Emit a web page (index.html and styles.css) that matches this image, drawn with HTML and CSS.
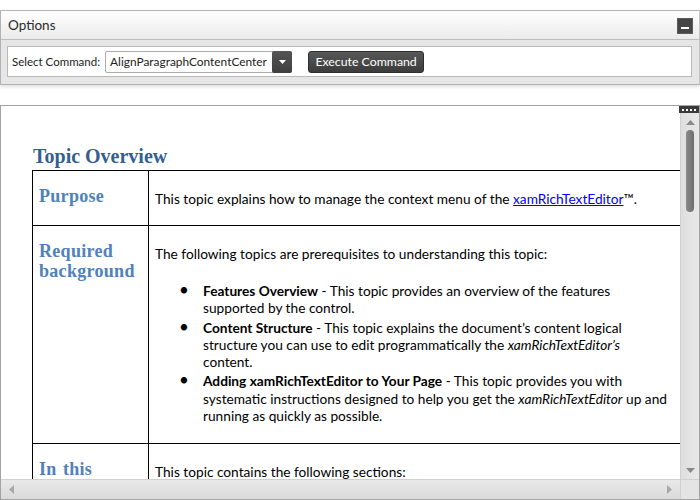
FILE: index.html
```html
<!DOCTYPE html>
<html>
<head>
<meta charset="utf-8">
<link rel="stylesheet" href="styles.css">
</head>
<body>
<div class="options">
  <div class="options-head">
    <span class="options-title">Options</span>
    <span class="min-btn"><span class="min-bar"></span></span>
  </div>
  <div class="options-body">
    <div class="cmd-box">
      <span class="cmd-label">Select Command:</span>
      <span class="combo">
        <span class="combo-text">AlignParagraphContentCenter</span>
        <span class="combo-btn"><svg width="7" height="4" viewBox="0 0 7 4"><path d="M0 0H7L3.5 4Z" fill="#fff"/></svg></span>
      </span>
      <span class="exec-btn">Execute Command</span>
    </div>
  </div>
</div>

<div class="editor">
  <div class="doc">
    <h1 class="doc-title">Topic Overview</h1>
    <table class="topic-table">
      <tr class="row-purpose">
        <td class="label">Purpose</td>
        <td class="desc"><p class="para">This topic explains how to manage the context menu of the <a class="link" href="#">xamRichTextEditor</a>™.</p></td>
      </tr>
      <tr class="row-req">
        <td class="label">Required background</td>
        <td class="desc">
          <p class="para intro">The following topics are prerequisites to understanding this topic:</p>
          <ul class="prereq">
            <li><b>Features Overview</b> - This topic provides an overview of the features supported by the control.</li>
            <li><b>Content Structure</b> - This topic explains the document’s content logical structure you can use to edit programmatically the <i>xamRichTextEditor’s</i> content.</li>
            <li><b>Adding xamRichTextEditor to Your Page</b> - This topic provides you with systematic instructions designed to help you get the <i>xamRichTextEditor</i> up and running as quickly as possible.</li>
          </ul>
        </td>
      </tr>
      <tr class="row-sections">
        <td class="label">In this topic</td>
        <td class="desc"><p class="para">This topic contains the following sections:</p></td>
      </tr>
    </table>
  </div>
  <div class="vscroll">
    <svg class="arrow" width="9" height="5" viewBox="0 0 9 5"><path d="M0 5L4.5 0L9 5Z" fill="#8a8a8a"/></svg>
    <div class="thumb"></div>
    <div class="vspace"></div>
    <svg class="arrow" width="9" height="5" viewBox="0 0 9 5"><path d="M0 0H9L4.5 5Z" fill="#8a8a8a"/></svg>
  </div>
  <div class="hscroll">
    <svg class="arrow" width="5" height="9" viewBox="0 0 5 9"><path d="M5 0V9L0 4.5Z" fill="#a8a8a8"/></svg>
    <svg class="arrow" width="5" height="9" viewBox="0 0 5 9"><path d="M0 0V9L5 4.5Z" fill="#a8a8a8"/></svg>
  </div>
  <div class="corner"></div>
  <div class="grip"><span></span><span></span><span></span><span></span></div>
</div>
</body>
</html>
```

FILE: styles.css
```css
html, body {
  margin: 0;
  padding: 0;
  background: #fff;
}
body {
  width: 700px;
  height: 500px;
  overflow: hidden;
  font-family: "Lato", sans-serif;
}

/* ---------- Options panel ---------- */
.options {
  margin-top: 10px;
  border: 1px solid #b2b2b2;
  border-right-color: #c4c4c4;
  background: #e6e6e6;
  box-shadow: 0 2px 3px rgba(0,0,0,0.12);
}
.options-head {
  height: 28px;
  display: flex;
  align-items: center;
  justify-content: space-between;
  padding: 0 6px 0 7px;
  background: linear-gradient(#ffffff, #ebebeb);
  border-bottom: 1px solid #bdbdbd;
}
.options-title {
  font-size: 13.5px;
  color: #2b2b2b;
}
.min-btn {
  width: 16px;
  height: 16px;
  background: #464646;
  border: 1px solid #5c5c5c;
  box-sizing: border-box;
  display: flex;
  align-items: flex-end;
  justify-content: center;
  padding-bottom: 4px;
  margin-top: 2px;
}
.min-bar {
  width: 8px;
  height: 2px;
  background: #fff;
}
.options-body {
  padding: 6px 7px 7px 6px;
}
.cmd-box {
  height: 31px;
  box-sizing: border-box;
  background: #fff;
  border: 1px solid #b8b8b8;
  display: flex;
  align-items: center;
  padding-left: 4px;
}
.cmd-label {
  font-size: 11.5px;
  color: #222;
}
.combo {
  margin-left: 5px;
  width: 187px;
  height: 22px;
  box-sizing: border-box;
  border: 1px solid #ababab;
  border-radius: 2px;
  display: flex;
  align-items: center;
  justify-content: space-between;
  padding-left: 4px;
}
.combo-text {
  font-size: 11.9px;
  color: #222;
}
.combo-btn {
  width: 20px;
  height: 22px;
  margin-right: -1px;
  background: linear-gradient(#555, #3e3e3e);
  border-radius: 2px;
  display: flex;
  align-items: center;
  justify-content: center;
}
.exec-btn {
  margin-left: 16px;
  width: 116px;
  height: 22px;
  box-sizing: border-box;
  border: 1px solid #2e2e2e;
  border-radius: 3px;
  background: linear-gradient(#585858, #3c3c3c);
  color: #fff;
  font-size: 12.3px;
  display: flex;
  align-items: center;
  justify-content: center;
}

/* ---------- Editor ---------- */
.editor {
  position: relative;
  margin-top: 20px;
  height: 395px;
  box-sizing: border-box;
  border: 1px solid #a3a3a3;
  display: grid;
  grid-template-columns: 1fr 19px;
  grid-template-rows: 1fr 20px;
}
.doc {
  overflow: hidden;
  padding: 39px 0 0 31px;
}
.doc-title {
  margin: 0 0 2px 1px;
  font-family: "Liberation Serif", serif;
  font-weight: bold;
  font-size: 20px;
  line-height: 23px;
  color: #365f91;
}
.topic-table {
  border-collapse: collapse;
  width: 670px;
  table-layout: fixed;
}
.topic-table td {
  border: 1px solid #000;
  vertical-align: top;
}
.label {
  width: 97px;
  padding: 15px 12px 0 6px;
  font-family: "Liberation Serif", serif;
  font-weight: bold;
  font-size: 18px;
  letter-spacing: 0.3px;
  word-spacing: 1.5px;
  line-height: 20px;
  color: #4f81bd;
}
.desc {
  padding: 19px 31px 17px 6px;
  font-size: 13.7px;
  line-height: 18px;
  color: #000;
}
.para {
  margin: 0;
}
.intro {
  margin-bottom: 19px;
}
.link {
  color: #0000ff;
}
.prereq {
  margin: 0;
  padding-left: 48px;
  list-style: none;
  line-height: 17.3px;
}
.prereq li {
  margin-bottom: 2px;
}
.prereq li::before {
  content: "•";
  display: inline-block;
  width: 24px;
  margin-left: -24px;
  font-size: 17px;
  line-height: 10px;
}
.row-purpose td {
  height: 18px;
}
.row-sections .desc {
  padding-top: 19px;
}

/* ---------- scrollbars ---------- */
.vscroll {
  background: linear-gradient(90deg, #dedede, #e8e8e8);
  border-left: 1px solid #d0d0d0;
  display: flex;
  flex-direction: column;
  align-items: center;
  padding: 14px 0 6px;
}
.thumb {
  margin-top: 5px;
  width: 8px;
  height: 82px;
  border-radius: 4px;
  background: linear-gradient(90deg, #8a8a8a, #6e6e6e);
}
.vspace {
  flex: 1;
}
.hscroll {
  background: linear-gradient(#e9e9e9, #dadada);
  border-top: 1px solid #d0d0d0;
  display: flex;
  align-items: center;
  justify-content: space-between;
  padding: 0 8px 0 8px;
}
.corner {
  background: #e4e4e4;
  border-top: 1px solid #d0d0d0;
  border-left: 1px solid #d0d0d0;
}
.grip {
  position: absolute;
  top: 0;
  right: 0;
  width: 20px;
  height: 7px;
  background: #3a3a3a;
  display: flex;
  align-items: center;
  justify-content: center;
  gap: 2px;
}
.grip span {
  width: 2px;
  height: 2px;
  background: #fff;
}
```
